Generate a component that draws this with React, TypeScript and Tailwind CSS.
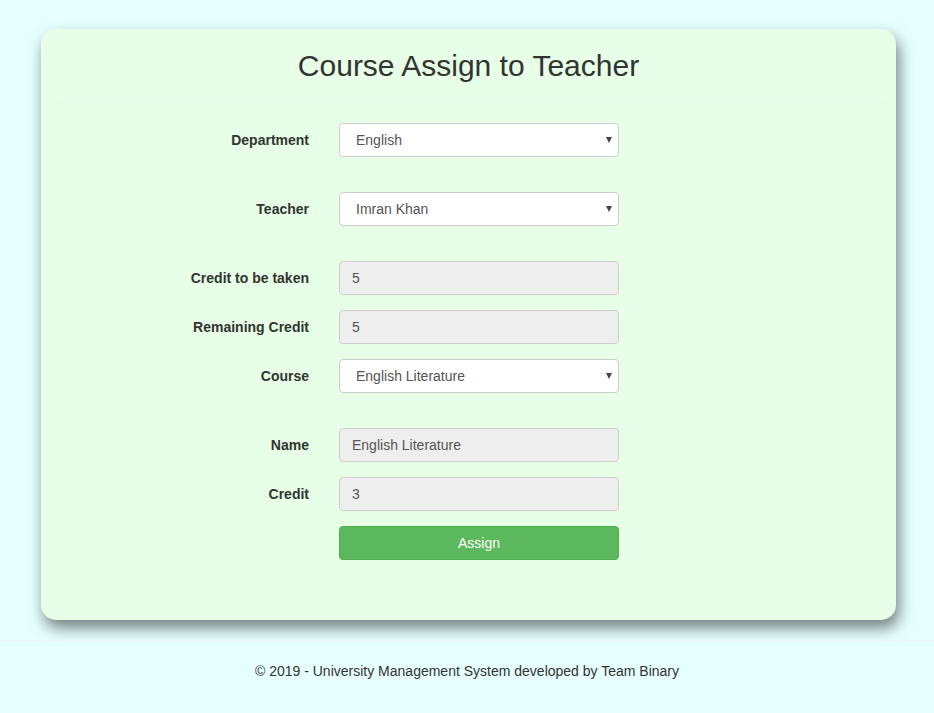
import React from "react"

const font = { fontFamily: '"Liberation Sans", Arial, Helvetica, sans-serif' }

type Field =
  | { label: string; kind: "select"; value: string; gapAfter: number }
  | { label: string; kind: "readonly"; value: string; gapAfter: number }

const fields: Field[] = [
  { label: "Department", kind: "select", value: "English", gapAfter: 35 },
  { label: "Teacher", kind: "select", value: "Imran Khan", gapAfter: 35 },
  { label: "Credit to be taken", kind: "readonly", value: "5", gapAfter: 15 },
  { label: "Remaining Credit", kind: "readonly", value: "5", gapAfter: 15 },
  { label: "Course", kind: "select", value: "English Literature", gapAfter: 35 },
  { label: "Name", kind: "readonly", value: "English Literature", gapAfter: 15 },
  { label: "Credit", kind: "readonly", value: "3", gapAfter: 15 },
]

function FormRow({ field }: { field: Field }) {
  return (
    <div className="flex items-center" style={{ marginBottom: field.gapAfter }}>
      <label className="w-[268px] text-right text-[14px] font-bold text-[#333]">{field.label}</label>
      <div className="ml-[30px] w-[280px]">
        {field.kind === "select" ? (
          <div className="relative">
            <select
              defaultValue={field.value}
              className="h-[34px] w-full appearance-none rounded-[4px] border border-[#ccc] bg-white pl-[16px] pr-6 text-[14px] text-[#555] outline-none"
              style={font}
            >
              <option>{field.value}</option>
            </select>
            <span className="pointer-events-none absolute right-[7px] top-[14px] h-0 w-0 border-x-[3.5px] border-t-[6px] border-x-transparent border-t-[#444]" />
          </div>
        ) : (
          <input
            readOnly
            disabled
            value={field.value}
            className="h-[34px] w-full rounded-[4px] border border-[#ccc] bg-[#eee] px-[12px] text-[14px] text-[#555] outline-none"
            style={font}
          />
        )}
      </div>
    </div>
  )
}

export default function App() {
  return (
    <div className="min-h-[713px] bg-[#e6ffff] text-[#333]" style={font}>
      <div className="px-[41px] pt-[29px] pr-[38px]">
        <div className="rounded-[15px] bg-[#e6ffe6] pb-[60px] shadow-[3px_8px_15px_rgba(0,0,0,0.5)]">
          <h2 className="pt-[20px] text-center text-[30px] leading-[33px] text-[#333]">Course Assign to Teacher</h2>
          <hr className="mx-[14px] mt-[20px] mb-[20px] mr-[9px] border-t border-[#eaf5ea]" />

          <form>
            {fields.map((f) => (
              <FormRow key={f.label} field={f} />
            ))}
            <div className="flex">
              <div className="ml-[298px] w-[280px]">
                <button
                  type="button"
                  className="h-[34px] w-full rounded-[4px] border border-[#4cae4c] bg-[#5cb85c] text-[14px] text-white"
                  style={font}
                >
                  Assign
                </button>
              </div>
            </div>
          </form>
        </div>
      </div>

      <hr className="mt-[20px] border-t border-[#eaf5f5]" />
      <footer className="pt-[20px] pb-[32px] text-center text-[14px] leading-[20px] text-[#333]">
        <p>© 2019 - University Management System developed by Team Binary</p>
      </footer>
    </div>
  )
}
